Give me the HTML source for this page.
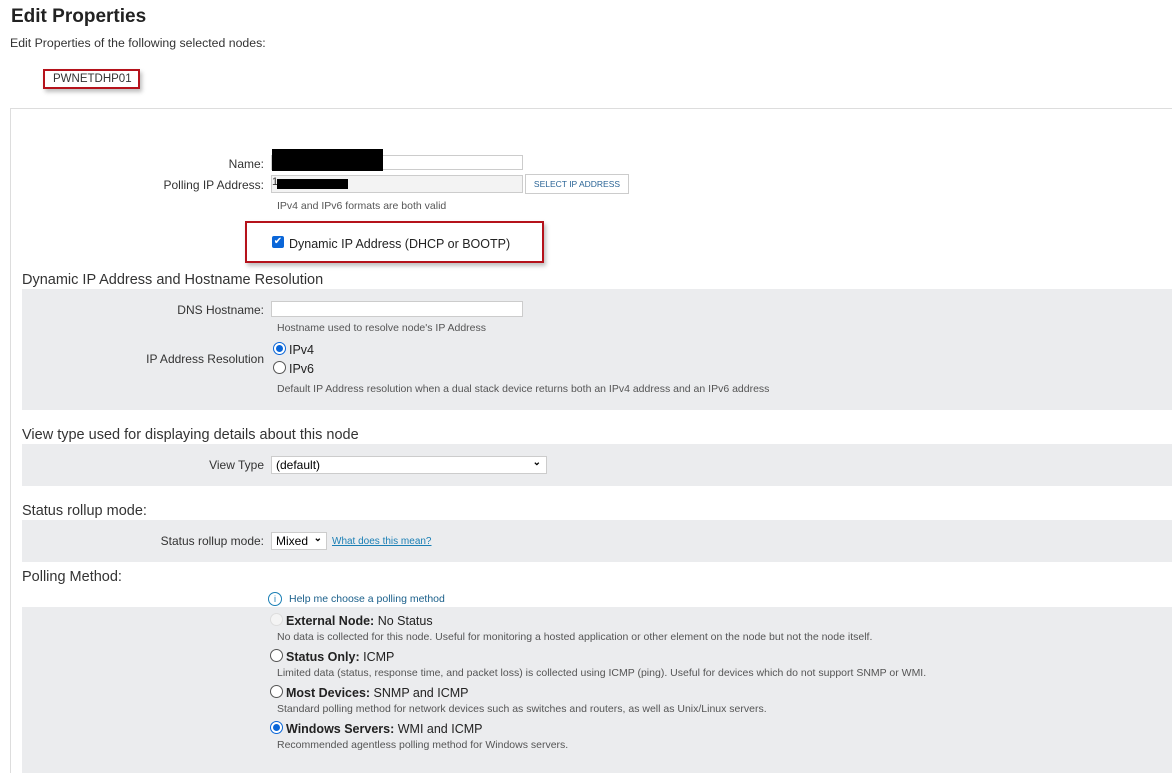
<!DOCTYPE html>
<html><head><meta charset="utf-8"><style>
*{margin:0;padding:0;box-sizing:border-box}
html,body{width:1172px;height:773px;overflow:hidden}
body{background:#fff;font-family:"Liberation Sans",sans-serif;color:#333;position:relative}
.a{position:absolute;white-space:nowrap}
.gray{position:absolute;left:22px;width:1150px;background:#ebecee}
.lbl{font-size:12px;color:#333;text-align:right}
.hint{font-size:10.5px;color:#555}
.inp{position:absolute;background:#fff;border:1px solid #ccc}
.sec{font-size:14.5px;color:#333}
.radio{position:absolute;width:13px;height:13px;border:1px solid #555;border-radius:50%;background:#fff}
.radio.on{border:1px solid #0a66d8}
.radio.on::after{content:"";position:absolute;left:2px;top:2px;width:7px;height:7px;border-radius:50%;background:#0a66d8}
.opt{font-size:12.5px;color:#222}
</style></head><body>
<div class="a" style="left:11px;top:6px;font-size:19px;font-weight:bold;color:#222">Edit Properties</div>
<div class="a" style="left:10px;top:36px;font-size:12.3px;color:#333">Edit Properties of the following selected nodes:</div>
<div class="a" style="left:43px;top:69px;width:97px;height:20px;border:2px solid #b5121b;box-shadow:2px 3px 4px rgba(0,0,0,.25);font-size:11.5px;padding:2px 0 0 8px;color:#333">PWNETDHP01</div>
<div class="a" style="left:10px;top:108px;width:1170px;height:700px;border:1px solid #ddd;border-right:none;border-bottom:none"></div>

<div class="a lbl" style="left:150px;width:114px;top:157px">Name:</div>
<div class="inp" style="left:271px;top:155px;width:252px;height:15px"></div>
<div class="a" style="left:272px;top:149px;width:111px;height:22px;background:#000"></div>
<div class="a lbl" style="left:120px;width:144px;top:178px">Polling IP Address:</div>
<div class="inp" style="left:271px;top:175px;width:252px;height:18px;background:#f3f3f3"></div>
<div class="a" style="left:272px;top:176px;font-size:11px">1</div>
<div class="a" style="left:277px;top:179px;width:71px;height:10px;background:#000"></div>
<div class="a" style="left:525px;top:174px;width:104px;height:20px;border:1px solid #ccc;font-size:8.5px;color:#2a6496;text-align:center;line-height:18px">SELECT IP ADDRESS</div>
<div class="a hint" style="left:277px;top:200px">IPv4 and IPv6 formats are both valid</div>
<div class="a" style="left:245px;top:221px;width:299px;height:42px;border:2px solid #b5121b;box-shadow:2px 3px 4px rgba(0,0,0,.25)"></div>
<div class="a" style="left:272px;top:236px;width:12px;height:12px;background:#0a66d8;border-radius:2px;color:#fff;font-size:10px;line-height:12px;text-align:center">✔</div>
<div class="a" style="left:289px;top:237px;font-size:12.5px;color:#222">Dynamic IP Address (DHCP or BOOTP)</div>

<div class="a sec" style="left:22px;top:272px">Dynamic IP Address and Hostname Resolution</div>
<div class="gray" style="top:289px;height:121px"></div>
<div class="a lbl" style="left:120px;width:144px;top:303px">DNS Hostname:</div>
<div class="inp" style="left:271px;top:301px;width:252px;height:16px"></div>
<div class="a hint" style="left:277px;top:322px">Hostname used to resolve node's IP Address</div>
<div class="a lbl" style="left:100px;width:164px;top:352px">IP Address Resolution</div>
<div class="radio on" style="left:273px;top:342px"></div>
<div class="a opt" style="left:289px;top:343px">IPv4</div>
<div class="radio" style="left:273px;top:361px"></div>
<div class="a opt" style="left:289px;top:362px">IPv6</div>
<div class="a hint" style="left:277px;top:383px">Default IP Address resolution when a dual stack device returns both an IPv4 address and an IPv6 address</div>

<div class="a sec" style="left:22px;top:427px">View type used for displaying details about this node</div>
<div class="gray" style="top:444px;height:42px"></div>
<div class="a lbl" style="left:150px;width:114px;top:458px">View Type</div>
<div class="inp" style="left:271px;top:456px;width:276px;height:18px;font-size:12px;color:#000;padding:1px 0 0 4px">(default)<span style="position:absolute;right:5px;top:0;font-size:10px;font-weight:bold">&#8964;</span></div>

<div class="a sec" style="left:22px;top:503px">Status rollup mode:</div>
<div class="gray" style="top:520px;height:42px"></div>
<div class="a lbl" style="left:120px;width:144px;top:534px">Status rollup mode:</div>
<div class="inp" style="left:271px;top:532px;width:56px;height:18px;font-size:12px;color:#000;padding:1px 0 0 4px">Mixed<span style="position:absolute;right:4px;top:0;font-size:10px;font-weight:bold">&#8964;</span></div>
<div class="a" style="left:332px;top:536px;font-size:10px;color:#1a7fb5;text-decoration:underline">What does this mean?</div>

<div class="a sec" style="left:22px;top:569px">Polling Method:</div>
<div class="a" style="left:268px;top:592px;width:14px;height:14px;border:1px solid #1a7fb5;border-radius:50%;font-size:9px;color:#1a7fb5;text-align:center;line-height:12px">i</div>
<div class="a" style="left:289px;top:593px;font-size:10.5px;color:#1a5f8a">Help me choose a polling method</div>
<div class="gray" style="top:607px;height:166px"></div>
<div class="radio" style="left:270px;top:613px;border-color:#ddd;background:#f4f4f4"></div>
<div class="a opt" style="left:286px;top:614px"><b>External Node:</b> No Status</div>
<div class="a hint" style="left:277px;top:631px">No data is collected for this node. Useful for monitoring a hosted application or other element on the node but not the node itself.</div>
<div class="radio" style="left:270px;top:649px"></div>
<div class="a opt" style="left:286px;top:650px"><b>Status Only:</b> ICMP</div>
<div class="a hint" style="left:277px;top:667px">Limited data (status, response time, and packet loss) is collected using ICMP (ping). Useful for devices which do not support SNMP or WMI.</div>
<div class="radio" style="left:270px;top:685px"></div>
<div class="a opt" style="left:286px;top:686px"><b>Most Devices:</b> SNMP and ICMP</div>
<div class="a hint" style="left:277px;top:703px">Standard polling method for network devices such as switches and routers, as well as Unix/Linux servers.</div>
<div class="radio on" style="left:270px;top:721px"></div>
<div class="a opt" style="left:286px;top:722px"><b>Windows Servers:</b> WMI and ICMP</div>
<div class="a hint" style="left:277px;top:739px">Recommended agentless polling method for Windows servers.</div>
</body></html>
